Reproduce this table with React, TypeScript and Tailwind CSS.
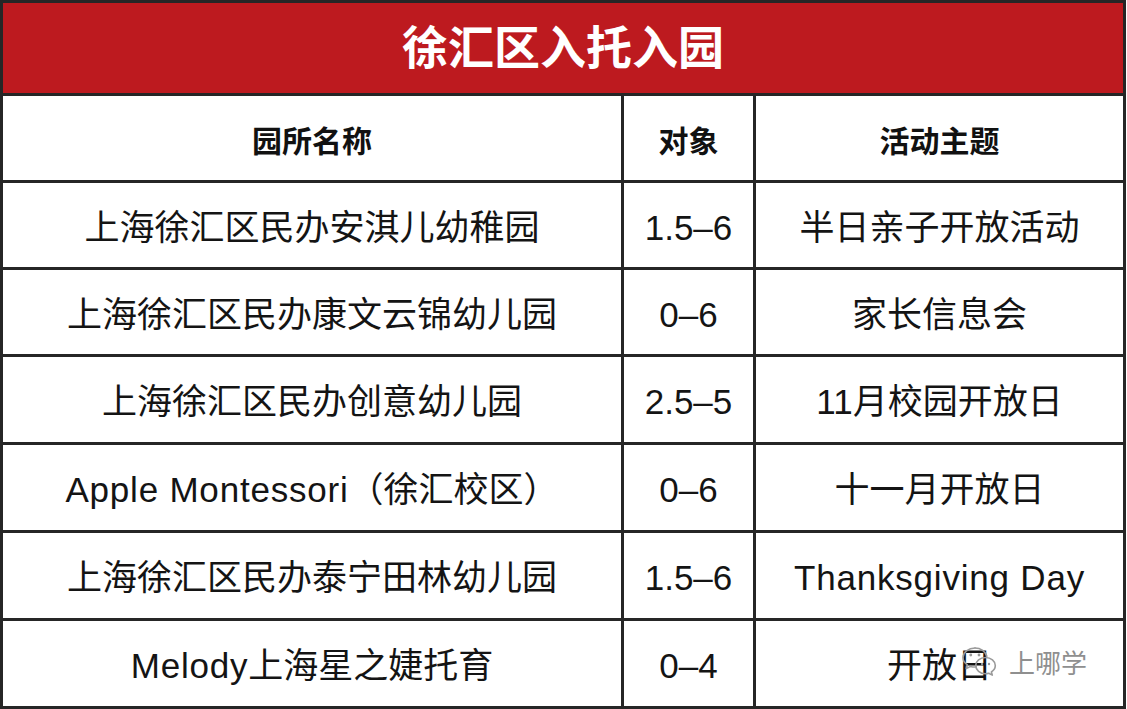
import React from "react";

type Row = { name: React.ReactNode; age: string; theme: React.ReactNode; h: string };

const L = ({ children }: { children: React.ReactNode }) => (
  <span className="tracking-[0.8px]">{children}</span>
);

const rows: Row[] = [
  { name: "上海徐汇区民办安淇儿幼稚园", age: "1.5–6", theme: "半日亲子开放活动", h: "h-[84px]" },
  { name: "上海徐汇区民办康文云锦幼儿园", age: "0–6", theme: "家长信息会", h: "h-[84px]" },
  { name: "上海徐汇区民办创意幼儿园", age: "2.5–5", theme: "11月校园开放日", h: "h-[85px]" },
  { name: <><L>Apple Montessori</L>（徐汇校区）</>, age: "0–6", theme: "十一月开放日", h: "h-[85px]" },
  { name: "上海徐汇区民办泰宁田林幼儿园", age: "1.5–6", theme: <L>Thanksgiving Day</L>, h: "h-[85px]" },
  { name: <><L>Melody</L>上海星之婕托育</>, age: "0–4", theme: "开放日", h: "h-[85px]" },
];

function WechatIcon() {
  return (
    <svg width="36" height="34" viewBox="0 0 36 34" fill="none">
      <path
        d="M14 3C7.4 3 2 7.3 2 12.6c0 3 1.7 5.6 4.4 7.4L5.3 23.6l4.2-2.2c1.4.4 2.9.6 4.5.6.4 0 .8 0 1.2-.1"
        stroke="#9a9a9a"
        strokeWidth="1.6"
        strokeLinecap="round"
        strokeLinejoin="round"
      />
      <path
        d="M25.8 11.2C24.6 6.5 19.8 3 14 3"
        stroke="#9a9a9a"
        strokeWidth="1.6"
        strokeLinecap="round"
      />
      <path
        d="M24.5 12.5c-5.5 0-9.8 3.6-9.8 8.1s4.4 8.1 9.8 8.1c1.1 0 2.2-.2 3.2-.5l3.6 1.9-.9-3.1c2.3-1.5 3.9-3.8 3.9-6.4 0-4.5-4.3-8.1-9.8-8.1z"
        stroke="#9a9a9a"
        strokeWidth="1.6"
        strokeLinejoin="round"
      />
      <circle cx="9.8" cy="10" r="1.4" fill="#9a9a9a" />
      <circle cx="18" cy="10" r="1.4" fill="#9a9a9a" />
      <circle cx="21" cy="19" r="1.2" fill="#9a9a9a" />
      <circle cx="28" cy="19" r="1.2" fill="#9a9a9a" />
    </svg>
  );
}

export default function App() {
  const font = "font-['Liberation_Sans','Noto_Sans_CJK_SC',sans-serif]";
  return (
    <div className={`relative w-[1127px] h-[709px] bg-white overflow-hidden ${font}`}>
      <div className="w-[1126px] h-[709px] bg-[#262626] p-[3px] grid grid-cols-[618px_129px_367px] grid-rows-[90px_84px_auto] gap-[3px]">
        <div className="col-span-3 bg-[#bd1a1f] flex items-center justify-center pb-[8px]">
          <span className="text-[46px] leading-none font-bold text-white font-['Noto_Sans_CJK_SC',sans-serif]">
            徐汇区入托入园
          </span>
        </div>

        <div className="bg-white flex items-center justify-center pt-[2px] text-[30px] font-bold text-[#111] font-['Noto_Sans_CJK_SC',sans-serif]">
          园所名称
        </div>
        <div className="bg-white flex items-center justify-center pt-[2px] text-[30px] font-bold text-[#111] font-['Noto_Sans_CJK_SC',sans-serif]">
          对象
        </div>
        <div className="bg-white flex items-center justify-center pt-[2px] text-[30px] font-bold text-[#111] font-['Noto_Sans_CJK_SC',sans-serif]">
          活动主题
        </div>

        {rows.map((r, i) => (
          <React.Fragment key={i}>
            <div className={`${r.h} bg-white flex items-center justify-center pt-[6px] text-[35px] text-[#141414] whitespace-nowrap`}>
              <span>{r.name}</span>
            </div>
            <div className={`${r.h} bg-white flex items-center justify-center pt-[6px] text-[35px] text-[#141414] whitespace-nowrap`}>
              {r.age}
            </div>
            <div className={`${r.h} bg-white flex items-center justify-center pt-[6px] text-[35px] text-[#141414] whitespace-nowrap`}>
              <span>{r.theme}</span>
            </div>
          </React.Fragment>
        ))}
      </div>

      <div className="absolute left-[961px] top-[645px] flex items-center gap-[12px]">
        <WechatIcon />
        <span className="text-[26px] leading-none text-[#8f8f8f] font-['Noto_Sans_CJK_SC',sans-serif] [text-shadow:0_0_2px_#ffffff]">
          上哪学
        </span>
      </div>
    </div>
  );
}
